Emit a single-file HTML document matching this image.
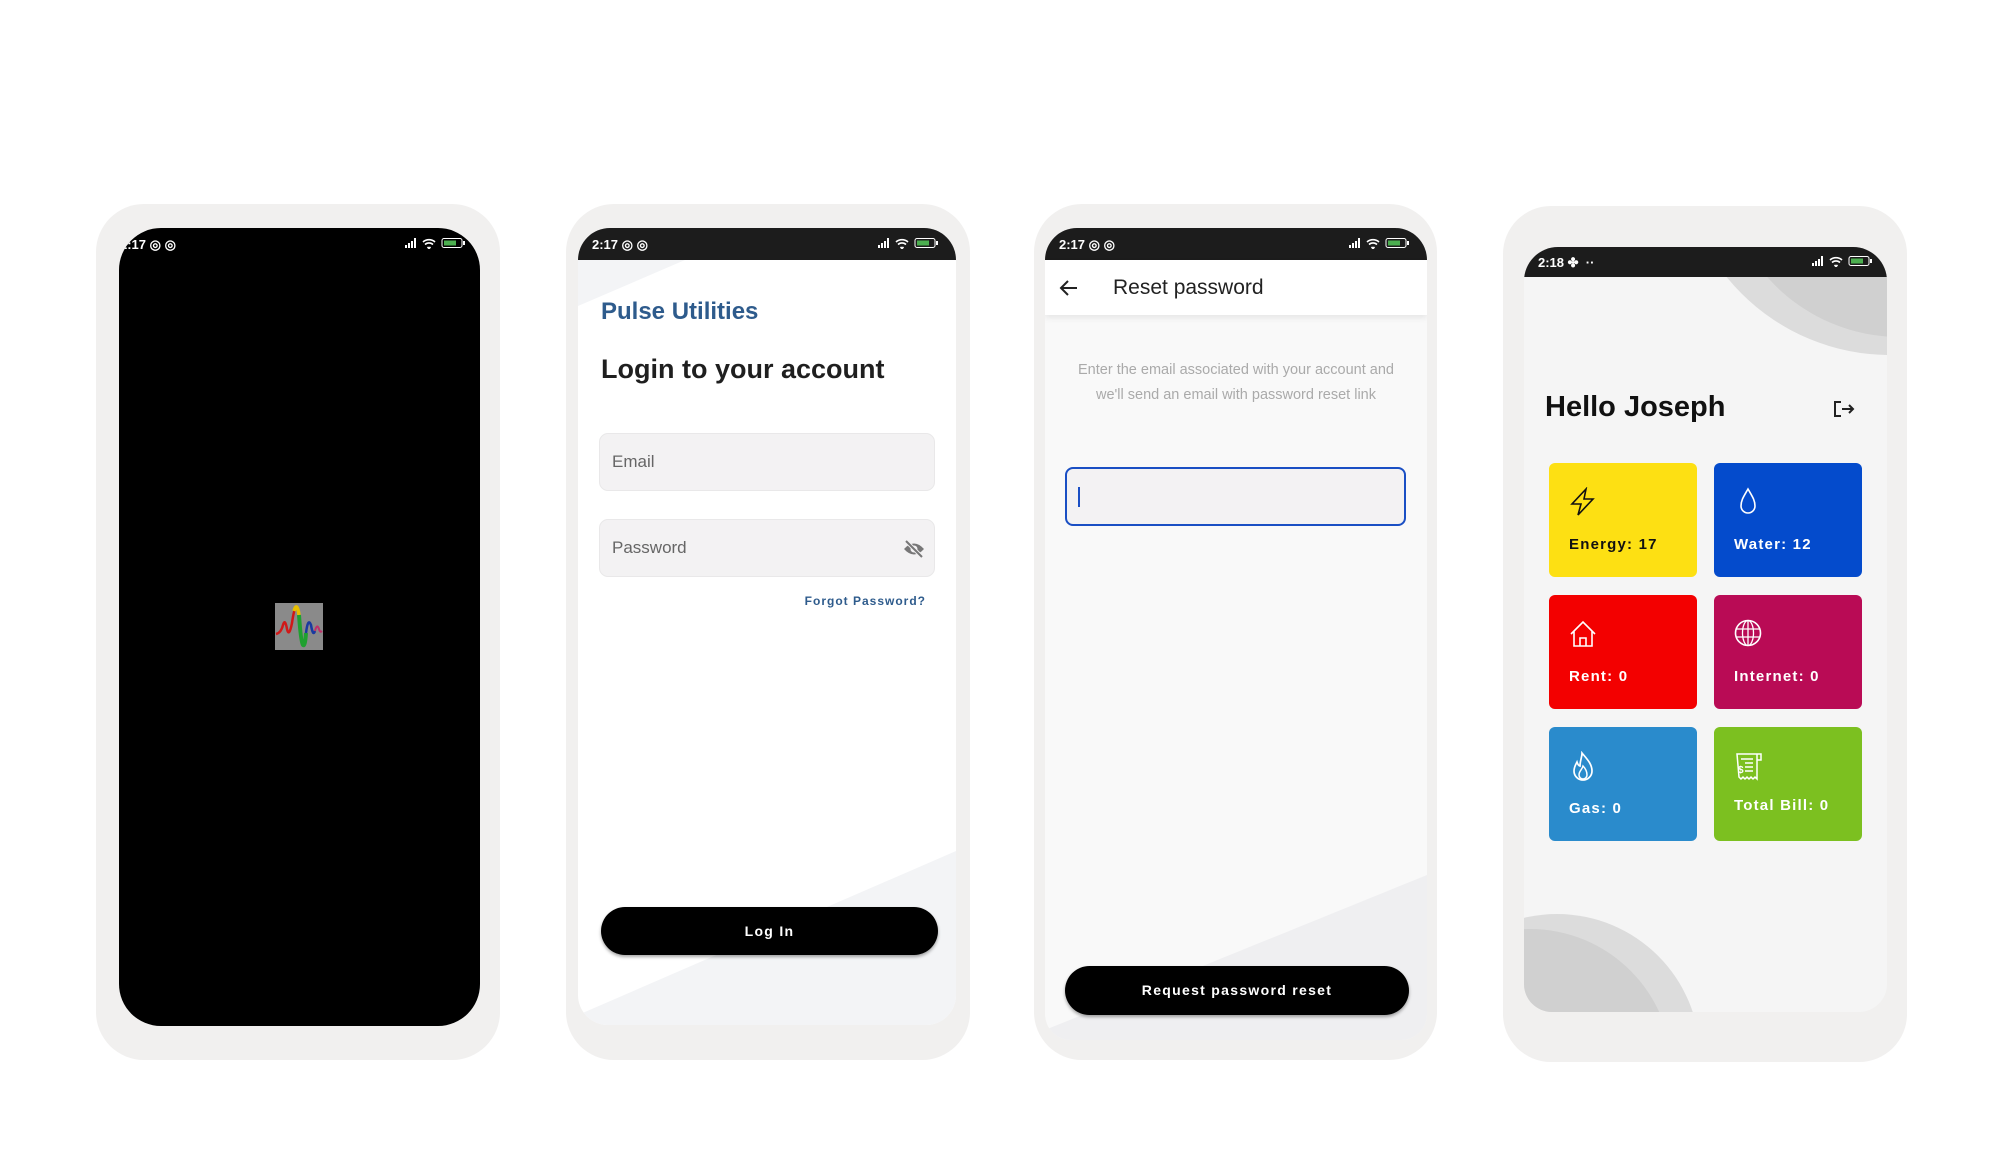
<!DOCTYPE html>
<html><head><meta charset="utf-8"><style>
*{margin:0;padding:0;box-sizing:border-box}
html,body{width:2006px;height:1150px;overflow:hidden}
body{background:#fff;position:relative;font-family:"Liberation Sans",Roboto,sans-serif}
.a{position:absolute}
.phone{position:absolute;background:#f1f0ef;border-radius:48px}
.scr{position:absolute;overflow:hidden}
.sb{position:absolute;left:0;right:0;top:0;height:32px;background:#1c1c1c;color:#fff;font-size:13px;font-weight:bold}
.sb .t{position:absolute;left:14px;top:9px}
.sb svg{position:absolute;top:9px}
.fld{position:absolute;background:#f3f2f3;border:1.5px solid #e9e8e9;border-radius:9px;color:#666;font-size:17px}
.btn{position:absolute;background:#000;border-radius:26px;color:#fff;font-weight:bold;font-size:14px;letter-spacing:1.3px;text-align:center;box-shadow:0 2px 3px rgba(0,0,0,.35)}
.tile{position:absolute;width:148px;height:114px;border-radius:6px;color:#fff;font-weight:bold;font-size:15px;letter-spacing:1.2px}
.tile svg{position:absolute;left:20px;top:24px}
.tile span{position:absolute;left:20px;top:73px}
</style></head><body>

<!-- phone 1 -->
<div class="phone" style="left:96px;top:204px;width:404px;height:856px"></div>
<div class="scr" style="left:119px;top:228px;width:361px;height:798px;background:#000;border-radius:42px">
  <div class="a" style="left:1px;top:9px;color:#fff;font-size:13px;font-weight:bold">2:17 ◎ ◎</div>
  <svg class="a" style="left:286px;top:9px" width="66" height="12"><g fill="#fff"><rect x="0" y="8" width="2" height="3"/><rect x="3" y="6" width="2" height="5"/><rect x="6" y="4" width="2" height="7"/><rect x="9" y="1" width="2" height="10"/></g><path d="M18 5a9 9 0 0 1 12 0M20 7.5a6 6 0 0 1 8 0M22.5 10l1.5 1.5 1.5-1.5" stroke="#fff" stroke-width="1.6" fill="none"/><rect x="37" y="1.5" width="20" height="9" rx="2" stroke="#fff" fill="none"/><rect x="39" y="3.5" width="12" height="5" fill="#4caf50"/><rect x="58" y="4" width="2" height="4" fill="#fff"/></svg>
  <div class="a" style="left:156px;top:375px;width:48px;height:47px;background:#8a8a8a">
    <svg width="48" height="47"><path d="M1 31 Q6 30 8 22 Q10 15 12 26 Q14 35 17 20 Q19 6 21 4" stroke="#d01818" stroke-width="2.5" fill="none"/><path d="M19 8 Q22 -2 24 12" stroke="#e8c000" stroke-width="3.5" fill="none"/><path d="M24 12 Q26 40 28 42 Q30 44 31 30" stroke="#20a030" stroke-width="4" fill="none"/><path d="M31 30 Q33 14 36 22 Q38 34 40 28" stroke="#1a3aa0" stroke-width="2.5" fill="none"/><path d="M40 28 Q42 20 44 26 Q45 30 47 28" stroke="#c0306a" stroke-width="2" fill="none"/></svg>
  </div>
</div>

<!-- phone 2 -->
<div class="phone" style="left:566px;top:204px;width:404px;height:856px"></div>
<div class="scr" style="left:578px;top:228px;width:378px;height:797px;background:#fff;border-radius:32px 32px 30px 30px">
  <svg class="a" style="left:0;top:0" width="378" height="797"><polygon points="0,32 107,32 0,78" fill="#f3f4f6"/><polygon points="0,787 378,623 378,797 0,797" fill="#f3f4f6"/></svg>
  <div class="sb"><span class="t">2:17 ◎ ◎</span>
  <svg style="left:300px" width="66" height="12"><g fill="#fff"><rect x="0" y="8" width="2" height="3"/><rect x="3" y="6" width="2" height="5"/><rect x="6" y="4" width="2" height="7"/><rect x="9" y="1" width="2" height="10"/></g><path d="M18 5a9 9 0 0 1 12 0M20 7.5a6 6 0 0 1 8 0M22.5 10l1.5 1.5 1.5-1.5" stroke="#fff" stroke-width="1.6" fill="none"/><rect x="37" y="1.5" width="20" height="9" rx="2" stroke="#fff" fill="none"/><rect x="39" y="3.5" width="12" height="5" fill="#4caf50"/><rect x="58" y="4" width="2" height="4" fill="#fff"/></svg></div>
  <div class="a" style="left:23px;top:70px;font-size:24px;font-weight:bold;color:#2e5b8c">Pulse Utilities</div>
  <div class="a" style="left:23px;top:126px;font-size:27px;font-weight:bold;color:#1f1f1f">Login to your account</div>
  <div class="fld" style="left:21px;top:205px;width:336px;height:58px"><span class="a" style="left:12px;top:18px">Email</span></div>
  <div class="fld" style="left:21px;top:291px;width:336px;height:58px"><span class="a" style="left:12px;top:18px">Password</span>
    <svg class="a" style="left:302px;top:20px" width="24" height="18"><path d="M2 9 Q12 -2 22 9 Q12 20 2 9Z" fill="#777"/><circle cx="12" cy="9" r="3.5" fill="#f3f2f3"/><path d="M4 1 L20 17" stroke="#f3f2f3" stroke-width="4"/><path d="M4 1 L20 17" stroke="#777" stroke-width="2"/></svg></div>
  <div class="a" style="right:30px;top:366px;font-size:12px;font-weight:bold;letter-spacing:1px;color:#2e5b8c">Forgot Password?</div>
  <div class="btn" style="left:23px;top:679px;width:337px;height:48px;line-height:48px">Log In</div>
</div>

<!-- phone 3 -->
<div class="phone" style="left:1034px;top:204px;width:403px;height:856px"></div>
<div class="scr" style="left:1045px;top:228px;width:382px;height:812px;background:#f9f9f9;border-radius:32px 32px 26px 26px">
  <svg class="a" style="left:0;top:0" width="382" height="812"><polygon points="0,802 382,647 382,812 0,812" fill="#efeff1"/></svg>
  <div class="sb"><span class="t">2:17 ◎ ◎</span>
  <svg style="left:304px" width="66" height="12"><g fill="#fff"><rect x="0" y="8" width="2" height="3"/><rect x="3" y="6" width="2" height="5"/><rect x="6" y="4" width="2" height="7"/><rect x="9" y="1" width="2" height="10"/></g><path d="M18 5a9 9 0 0 1 12 0M20 7.5a6 6 0 0 1 8 0M22.5 10l1.5 1.5 1.5-1.5" stroke="#fff" stroke-width="1.6" fill="none"/><rect x="37" y="1.5" width="20" height="9" rx="2" stroke="#fff" fill="none"/><rect x="39" y="3.5" width="12" height="5" fill="#4caf50"/><rect x="58" y="4" width="2" height="4" fill="#fff"/></svg></div>
  <div class="a" style="left:0;top:32px;width:382px;height:55px;background:#fff;box-shadow:0 3px 6px rgba(0,0,0,.08)">
    <svg class="a" style="left:14px;top:19px" width="20" height="18"><path d="M18 9H3M9 2L2 9l7 7" stroke="#222" stroke-width="2" fill="none"/></svg>
    <div class="a" style="left:68px;top:16px;font-size:21px;color:#222">Reset password</div>
  </div>
  <div class="a" style="left:0;top:130px;width:382px;text-align:center;font-size:14.5px;line-height:25px;color:#aaa">Enter the email associated with your account and<br>we'll send an email with password reset link</div>
  <div class="a" style="left:20px;top:239px;width:341px;height:59px;border:2px solid #1a4fc4;border-radius:8px;background:#f3f2f3"><div class="a" style="left:11px;top:18px;width:2px;height:20px;background:#1a4fc4"></div></div>
  <div class="btn" style="left:20px;top:738px;width:344px;height:49px;line-height:49px">Request password reset</div>
</div>

<!-- phone 4 -->
<div class="phone" style="left:1503px;top:206px;width:404px;height:856px"></div>
<div class="scr" style="left:1524px;top:247px;width:363px;height:765px;background:#f5f5f5;border-radius:34px 34px 28px 28px">
  <svg class="a" style="left:0;top:0" width="363" height="765"><circle cx="366" cy="-102" r="210" fill="#dcdcdc"/><circle cx="376" cy="-87" r="177" fill="#d0d0d0"/><circle cx="33" cy="810" r="143" fill="#dcdcdc"/><circle cx="6" cy="824" r="142" fill="#d0d0d0"/></svg>
  <div class="sb" style="height:30px"><span class="t" style="top:8px">2:18 ✤ &nbsp;··</span>
  <svg style="left:288px;top:8px" width="66" height="12"><g fill="#fff"><rect x="0" y="8" width="2" height="3"/><rect x="3" y="6" width="2" height="5"/><rect x="6" y="4" width="2" height="7"/><rect x="9" y="1" width="2" height="10"/></g><path d="M18 5a9 9 0 0 1 12 0M20 7.5a6 6 0 0 1 8 0M22.5 10l1.5 1.5 1.5-1.5" stroke="#fff" stroke-width="1.6" fill="none"/><rect x="37" y="1.5" width="20" height="9" rx="2" stroke="#fff" fill="none"/><rect x="39" y="3.5" width="12" height="5" fill="#4caf50"/><rect x="58" y="4" width="2" height="4" fill="#fff"/></svg></div>
  <div class="a" style="left:21px;top:144px;font-size:29px;font-weight:bold;color:#111">Hello Joseph</div>
  <svg class="a" style="left:309px;top:153px" width="22" height="18"><path d="M8 2H2v14h6M9 9h11M16 5l4 4-4 4" stroke="#222" stroke-width="2" fill="none"/></svg>
</div>
<div class="tile" style="left:1549px;top:463px;background:#fde013;color:#111"><svg width="28" height="30"><path d="M17 2L3 17h9l-3 11 15-16h-9z" stroke="#111" stroke-width="1.6" fill="none"/></svg><span>Energy: 17</span></div>
<div class="tile" style="left:1714px;top:463px;background:#044bcc"><svg width="28" height="30"><path d="M14 2C10 9 7 13 7 19a7 7 0 0 0 14 0c0-6-3-10-7-17z" stroke="#fff" stroke-width="1.6" fill="none"/></svg><span>Water: 12</span></div>
<div class="tile" style="left:1549px;top:595px;background:#f30000"><svg width="30" height="30"><path d="M2 15L14 3l12 12M5 12v15h18V12M11 27v-8h6v8" stroke="#fff" stroke-width="1.6" fill="none"/></svg><span>Rent: 0</span></div>
<div class="tile" style="left:1714px;top:595px;background:#b90b55"><svg width="30" height="30"><circle cx="14" cy="14" r="12.5" stroke="#fff" stroke-width="1.6" fill="none"/><ellipse cx="14" cy="14" rx="5.5" ry="12.5" stroke="#fff" stroke-width="1.3" fill="none"/><path d="M14 1.5v25M2 10h24M2 18h24" stroke="#fff" stroke-width="1.3"/></svg><span>Internet: 0</span></div>
<div class="tile" style="left:1549px;top:727px;background:#2a8bcc"><svg width="30" height="32"><path d="M13 2C18 8 23 13 23 20a9 9 0 0 1-18 0c0-4 2-7 3-9 1 3 2 4 3 4 0-5 2-9 2-13z" stroke="#fff" stroke-width="1.7" fill="none"/><path d="M10 24c0-4 3-5 4-9 3 3 4 6 4 9a4 4 0 0 1-8 0z" stroke="#fff" stroke-width="1.5" fill="none"/></svg><span>Gas: 0</span></div>
<div class="tile" style="left:1714px;top:727px;background:#7cc020"><svg width="30" height="30"><path d="M3 3h20v25l-2-2-2 2-2-2-2 2-2-2-2 2-2-2-2 2-2-2zM23 3h4v6h-4M7 8h12M11 12h8M11 16h8M11 20h8" stroke="#fff" stroke-width="1.5" fill="none"/><text x="4" y="22" fill="#fff" font-size="10" font-weight="bold" font-family="Liberation Sans">$</text></svg><span style="top:70px">Total Bill: 0</span></div>
</body></html>
